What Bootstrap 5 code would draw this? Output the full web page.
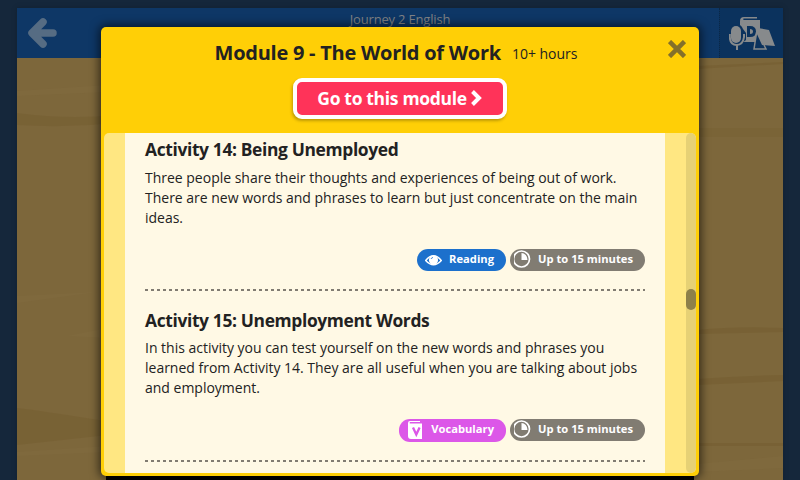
<!DOCTYPE html>
<html lang="en">
<head>
<meta charset="utf-8">
<meta name="viewport" content="width=device-width, initial-scale=1">
<title>Journey 2 English</title>
<link href="https://cdn.jsdelivr.net/npm/bootstrap@5.3.0/dist/css/bootstrap.min.css" rel="stylesheet">
<style>
body{background:#15273b;font-family:"Open Sans","Noto Sans",sans-serif;color:#222;height:480px;overflow:hidden;font-size:14px;line-height:20px}
.app-shell{width:766px;height:472px;margin:8px 0 0 17px;box-shadow:0 0 4px #12202f}
.app-bar{height:50px;background:#0e3766;color:#808285}
.app-title{font-size:13px;line-height:18px;padding:2px 0 0 2px;letter-spacing:-.18px}
.back-btn{width:62px;padding:9px 0 0 10px}
.tools-btn{width:64px;background:#0b325d;border-left:1px dotted #0a2747;padding:8px 0 0 9px}
.desk{height:422px}
.sheet{left:101px;top:27px;width:598px;height:449px;background:#ffcf06;border-radius:5px;padding:0 3px 3px;box-shadow:0 0 10px 2px rgba(0,0,0,.6)}
.sheet-floor{left:106px;top:470px;width:588px;height:10px;background:#000}
.sheet-head{height:106px;padding-top:14px}
.sheet-title{font-size:20px;line-height:24px;font-weight:700;letter-spacing:-.25px}
.hours{font-size:14px;line-height:20px;margin-left:11px;letter-spacing:-.02px;padding-top:2px}
.close-btn{right:13px;top:13px}
.go-btn,.go-btn:hover{background:#ff3359;color:#fff;border:4px solid #fff;border-radius:9px;width:214px;height:41px;font-size:17.5px;letter-spacing:-.33px;font-weight:700;line-height:20px;padding:0 1px 2px 0;margin-top:13px;box-shadow:-1px 2px 3px rgba(0,0,0,.25)}
.sheet-body{height:340px;background:#ffe782;border-radius:5px;padding-left:21px}
.paper{width:540px;background:#fff9e5;padding:5px 20px 0}
.track{width:10px;background:#e6d175;border-radius:5px;padding-top:156px}
.thumb{height:21px;background:#8e8049;border-radius:5px}
.activity h2{font-size:17.4px;line-height:22px;font-weight:700;letter-spacing:-.35px;margin:0 0 8px}
.activity p{margin:0 0 21px;letter-spacing:-.01px}
.activity{height:170px}
.activity + .activity h2{line-height:24px;margin-bottom:6px}
.tag{height:22px;border-radius:11px;color:#fff;font-size:11.2px;line-height:20px;font-weight:700}
.tag-time{background:#817c72;width:135px}
.tag-read{background:#1c70cc;width:89px}
.tag-vocab{background:#dc57e8;width:107px;height:23px}
.rule{margin-top:18px}
</style>
</head>
<body>
<div class="app-shell">
  <header class="app-bar d-flex justify-content-between">
    <div class="back-btn"><svg class="d-block" width="30" height="32" viewBox="0 0 30 32" fill="none" stroke="#566c83" stroke-width="7.500" stroke-linecap="round" stroke-linejoin="round"><path d="M16 5L5 16L16 27M5.500 16H26"/></svg></div>
    <div class="app-title">Journey 2 English</div>
    <div class="tools-btn"><svg class="d-block" width="50" height="36" viewBox="0 0 50 36">
      <path fill="#878a8c" d="M11 5Q11 1 15 1H28V2.500H15Q13 3 15 4H31V26H15Q11 26 11 22Z"/>
      <path fill="#0b325d" fill-rule="evenodd" d="M18 10H21Q27 10 27 15.500T21 21H18ZM21 13V18Q24 18 24 15.500T21 13Z"/>
      <path d="M1 13Q2 8 7 8T14 13L17 17V24L9 30L1 27Z" fill="#0b325d"/>
      <rect x="2" y="10" width="10" height="17" rx="5" fill="#878a8c"/>
      <path d="M0.800 18V21Q1 29 7.500 29T15 21V18M8 29V34" fill="none" stroke="#878a8c" stroke-width="2"/>
      <path d="M28 14L25 33H37L35 29" fill="#0b325d" stroke="#878a8c" stroke-width="1.500"/>
      <path d="M29 12L40 14L46 30L33 29L27 16Z" fill="#878a8c"/>
    </svg></div>
  </header>
  <svg class="desk d-block w-100" viewBox="0 0 766 422" preserveAspectRatio="none">
    <rect width="766" height="422" fill="#7d673b"/>
    <g fill="#765f32" opacity=".65">
      <path d="M0 55Q50 62 100 57V65Q50 70 0 67Z"/><path d="M680 8L766 4V6L680 11Z"/>
      <path d="M0 350Q40 355 100 365V376L0 387Z"/><path d="M680 321Q720 318 766 317V323L680 327Z"/>
      <path d="M680 272Q720 268 766 270V274L680 276Z"/><path d="M680 70H766V79H680Z" opacity=".5"/><path d="M680 385H766V388H680Z"/>
    </g>
    <g fill="#816b40" opacity=".5"><path d="M0 33L90 27V34L0 38Z"/><path d="M0 238L80 234L0 245Z"/><path d="M50 278L90 270V280Z"/><path d="M0 394L90 388V394L0 398Z"/><path d="M680 406L766 398V410L680 414Z"/></g>
  </svg>
</div>

<div class="sheet-floor position-absolute"></div>
<section class="sheet position-absolute">
  <div class="sheet-head d-flex flex-column align-items-center">
    <div class="d-flex align-items-center justify-content-center pe-2"><h1 class="sheet-title mb-0">Module 9 - The World of Work</h1><span class="hours">10+ hours</span></div>
    <button class="go-btn btn d-flex align-items-center justify-content-center"><span>Go to this module</span>
      <svg class="ms-1" width="11" height="16" viewBox="0 0 11 16" fill="none" stroke="#fff" stroke-width="4"><path d="M1.500 1.500L8 8L1.500 14.500"/></svg></button>
    <svg class="close-btn position-absolute" width="18" height="18" viewBox="0 0 18 18" stroke="#84702a" stroke-width="4.500"><path d="M1.500 1.500L16.500 16.500M16.500 1.500L1.500 16.500"/></svg>
  </div>
  <div class="sheet-body d-flex justify-content-between overflow-hidden">
    <div class="paper">
      <article class="activity">
        <h2>Activity 14: Being Unemployed</h2>
        <p>Three people share their thoughts and experiences of being out of work.<br>There are new words and phrases to learn but just concentrate on the main<br>ideas.</p>
        <div class="d-flex justify-content-end gap-1">
          <div class="tag tag-read d-flex justify-content-between ps-2"><svg width="17" height="22" viewBox="0 0 17 22"><path d="M.7 11.500Q8.500 2 16.300 11.500Q8.500 20 .7 11.500Z" fill="none" stroke="#fff" stroke-width="1.500"/><circle cx="8.500" cy="11" r="4.600" fill="#fff"/><path d="M6 10Q6.500 8.500 8 8.500" fill="none" stroke="#1c70cc" stroke-width=".8"/></svg><span class="tag-label pe-1 me-2">Reading</span></div>
          <div class="tag tag-time d-flex justify-content-between"><svg class="ms-1" width="18" height="22" viewBox="0 0 18 22"><circle cx="7.500" cy="10" r="8" fill="none" stroke="#fff" stroke-width="1.700"/><path d="M7.500 4A6 7 0 0 1 13.500 11H7.500Z" fill="#fff"/></svg><span class="tag-label pe-1 me-2">Up to 15 minutes</span></div>
        </div>
        <svg class="rule d-block" width="500" height="2"><path d="M0 1H500" stroke="#817c72" stroke-width="2" stroke-dasharray="3 3"/></svg>
      </article>
      <article class="activity">
        <h2>Activity 15: Unemployment Words</h2>
        <p>In this activity you can test yourself on the new words and phrases you<br>learned from Activity 14. They are all useful when you are talking about jobs<br>and employment.</p>
        <div class="d-flex justify-content-end gap-1">
          <div class="tag tag-vocab d-flex justify-content-between ps-2"><svg width="16" height="22" viewBox="0 0 16 22"><path fill="#fff" d="M1 4Q1 2 3 2H13V3H3Q2 4 3 4.500H15V20H4Q1 20 1 17Z"/><path d="M6 8.500L9.300 15.500L12.600 8.500" fill="none" stroke="#dc57e8" stroke-width="2.300"/></svg><span class="tag-label pe-1 me-2">Vocabulary</span></div>
          <div class="tag tag-time d-flex justify-content-between"><svg class="ms-1" width="18" height="22" viewBox="0 0 18 22"><circle cx="7.500" cy="10" r="8" fill="none" stroke="#fff" stroke-width="1.700"/><path d="M7.500 4A6 7 0 0 1 13.500 11H7.500Z" fill="#fff"/></svg><span class="tag-label pe-1 me-2">Up to 15 minutes</span></div>
        </div>
        <svg class="rule d-block" width="500" height="2"><path d="M0 1H500" stroke="#817c72" stroke-width="2" stroke-dasharray="3 3"/></svg>
      </article>
    </div>
    <div class="track"><div class="thumb"></div></div>
  </div>
</section>
<script src="https://cdn.jsdelivr.net/npm/bootstrap@5.3.0/dist/js/bootstrap.bundle.min.js"></script>
</body>
</html>
